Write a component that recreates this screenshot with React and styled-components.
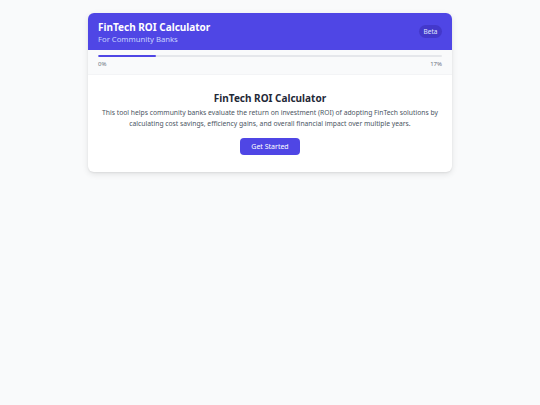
import React from "react";
import styled, { createGlobalStyle } from "styled-components";

const GlobalStyle = createGlobalStyle`
  html, body {
    margin: 0;
    padding: 0;
    background: #f9fafb;
    font-family: "Noto Sans", "Open Sans", sans-serif;
  }
`;

const Page = styled.div`
  min-height: 405px;
  padding-top: 13px;
  box-sizing: border-box;
`;

const Card = styled.div`
  width: 364px;
  margin: 0 auto;
  background: #ffffff;
  border-radius: 6px;
  overflow: hidden;
  box-shadow: 0 2px 6px rgba(0, 0, 0, 0.1), 0 1px 2px rgba(0, 0, 0, 0.06);
`;

const Header = styled.div`
  background: #4f46e5;
  height: 37px;
  padding: 0 10px;
  display: flex;
  align-items: center;
  justify-content: space-between;
  box-sizing: border-box;
`;

const TitleBlock = styled.div`
  display: flex;
  flex-direction: column;
`;

const Title = styled.h1`
  margin: 0;
  color: #ffffff;
  font-size: 10px;
  font-weight: 700;
  line-height: 14px;
`;

const Subtitle = styled.p`
  margin: 0;
  color: #c7d2fe;
  font-size: 7.7px;
  line-height: 10px;
`;

const Badge = styled.span`
  background: #4338ca;
  color: #e0e7ff;
  font-size: 6.5px;
  padding: 2px 4.5px;
  border-radius: 999px;
  line-height: 9px;
`;

const ProgressSection = styled.div`
  background: #f9fafb;
  padding: 5px 10px 5px;
  border-bottom: 1px solid #f3f4f6;
`;

const Track = styled.div`
  height: 2px;
  background: #e5e7eb;
  border-radius: 2px;
  overflow: hidden;
`;

const Fill = styled.div`
  height: 100%;
  background: #4f46e5;
  border-radius: 2px;
`;

const Labels = styled.div`
  display: flex;
  justify-content: space-between;
  margin-top: 3px;
  font-size: 6px;
  line-height: 9px;
  color: #6b7280;
`;

const Content = styled.div`
  padding: 16px 10px 17px;
  text-align: center;
  display: flex;
  flex-direction: column;
  align-items: center;
`;

const ContentTitle = styled.h2`
  margin: 0 0 2px;
  font-size: 10px;
  line-height: 14px;
  font-weight: 700;
  color: #1f2937;
`;

const Description = styled.p`
  margin: 0 0 9px;
  font-size: 6.75px;
  line-height: 11px;
  color: #4b5563;
`;

const Button = styled.button`
  display: block;
  background: #4f46e5;
  color: #ffffff;
  border: none;
  border-radius: 4px;
  width: 60px;
  height: 17px;
  padding: 0;
  font-family: inherit;
  font-size: 7px;
  cursor: pointer;
`;

export default function App() {
  const progress = 17;
  return (
    <>
      <GlobalStyle />
      <Page>
        <Card>
          <Header>
            <TitleBlock>
              <Title>FinTech ROI Calculator</Title>
              <Subtitle>For Community Banks</Subtitle>
            </TitleBlock>
            <Badge>Beta</Badge>
          </Header>
          <ProgressSection>
            <Track>
              <Fill style={{ width: `${progress}%` }} />
            </Track>
            <Labels>
              <span>0%</span>
              <span>{progress}%</span>
            </Labels>
          </ProgressSection>
          <Content>
            <ContentTitle>FinTech ROI Calculator</ContentTitle>
            <Description>
              This tool helps community banks evaluate the return on investment (ROI) of adopting FinTech solutions by
              calculating cost savings, efficiency gains, and overall financial impact over multiple years.
            </Description>
            <Button>Get Started</Button>
          </Content>
        </Card>
      </Page>
    </>
  );
}
